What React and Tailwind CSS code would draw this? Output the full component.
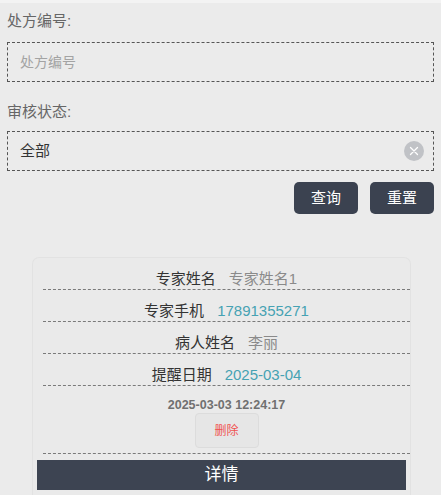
import React from 'react';

const font = { fontFamily: '"Liberation Sans", "Noto Sans CJK SC", sans-serif' };

const rows = [
  { label: '专家姓名', value: '专家姓名1', tone: 'text-[#8a8a8a]' },
  { label: '专家手机', value: '17891355271', tone: 'text-[#46a2b3]' },
  { label: '病人姓名', value: '李丽', tone: 'text-[#8a8a8a]' },
  { label: '提醒日期', value: '2025-03-04', tone: 'text-[#46a2b3]' },
];

const Field = ({ label, children, top }) => (
  <div className={top}>
    <div className="text-[15px] leading-[22px] text-[#666]">{label}</div>
    {children}
  </div>
);

export default function App() {
  return (
    <div className="min-h-[495px] w-[441px] overflow-hidden bg-[#ebebeb]" style={font}>
      {/* top strip */}
      <div className="h-[3px] bg-[#f3f3f3]" />

      {/* ── Search form ───────────────────────────────────────── */}
      <div className="px-[7px]">
        <Field label="处方编号:" top="mt-[7px]">
          <div className="mt-[10px] flex h-[40px] items-center border border-dashed border-[#555] pl-[12px] text-[14px] text-[#a3a3a3]">
            处方编号
          </div>
        </Field>

        <Field label="审核状态:" top="mt-[19px]">
          <div className="mt-[8px] flex h-[40px] items-center justify-between border border-dashed border-[#555] pl-[12px] pr-[9px] text-[15px] text-[#333]">
            <span>全部</span>
            <span className="flex h-[20px] w-[20px] items-center justify-center rounded-full bg-[#c0c2c6]">
              <svg width="10" height="10" viewBox="0 0 10 10">
                <path d="M1.5 1.5 L8.5 8.5 M8.5 1.5 L1.5 8.5" stroke="#fff" strokeWidth="1.3" strokeLinecap="round" />
              </svg>
            </span>
          </div>
        </Field>

        <div className="mt-[11px] flex justify-end gap-[12px]">
          <button className="h-[32px] w-[64px] rounded-[5px] bg-[#3b4250] text-[15px] text-white">查询</button>
          <button className="h-[32px] w-[64px] rounded-[5px] bg-[#3b4250] text-[15px] text-white">重置</button>
        </div>
      </div>

      {/* ── Reminder card ─────────────────────────────────────── */}
      <div className="ml-[32px] mt-[43px] w-[379px] rounded-t-[7px] border border-b-0 border-[#e2e2e2] bg-[#eaeaea] pb-[8px]">
        <div className="pl-[10px]">
          {rows.map((r) => (
            <div
              key={r.label}
              className="flex justify-center gap-[13px] border-b border-dashed border-[#7a7a7a] pb-[1px] pt-[12px] text-[15px] leading-[18px]"
            >
              <span className="text-[#333]">{r.label}</span>
              <span className={r.tone}>{r.value}</span>
            </div>
          ))}

          <div className="flex flex-col items-center border-b border-dashed border-[#7a7a7a] pb-[5px] pt-[11px]">
            <div className="text-[12.5px] font-bold leading-[16px] text-[#707070]">2025-03-03 12:24:17</div>
            <button className="h-[35px] w-[64px] rounded-[4px] border border-[#dcdcdc] bg-[#e6e6e6] text-[12px] text-[#f0524f]">
              删除
            </button>
          </div>
        </div>

        <div className="mx-[4px] mt-[6px] flex h-[30px] items-center justify-center bg-[#3d4452] text-[17px] text-white">
          详情
        </div>
      </div>
    </div>
  );
}
